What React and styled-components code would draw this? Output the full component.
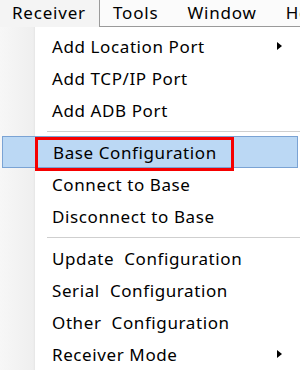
import styled, { createGlobalStyle } from 'styled-components';

const GlobalStyle = createGlobalStyle`
  html, body {
    margin: 0;
    padding: 0;
    background: #ffffff;
  }
  body {
    font-family: "Noto Sans", "Open Sans", sans-serif;
    color: #000;
    overflow: hidden;
  }
`;

const Screen = styled.div`
  width: 300px;
  height: 370px;
  display: flex;
  flex-direction: column;
  overflow: hidden;
  background: #ffffff;
`;

const MenuBar = styled.div`
  height: 27px;
  display: flex;
  align-items: stretch;
  flex-shrink: 0;
  font-size: 17px;
  letter-spacing: 0.8px;
`;

const OpenTab = styled.div`
  width: 99px;
  flex-shrink: 0;
  background: #f4f4f4;
  padding-left: 12px;
  line-height: 26px;
  box-sizing: border-box;
`;

const BarRest = styled.div`
  flex: 1;
  min-width: 0;
  overflow: hidden;
  display: flex;
  gap: 29px;
  padding-left: 13px;
  background: #fbfbfb;
  border-left: 1px solid #9a9a9a;
  border-bottom: 1px solid #9a9a9a;
  line-height: 25px;
  white-space: nowrap;
`;

const Menu = styled.div`
  flex: 1;
  position: relative;
  padding-top: 3px;
  background: linear-gradient(to right, #f7f7f7 0px, #efefef 33px, #e6e6e6 35px, #ffffff 35px);
`;

const Item = styled.div`
  position: relative;
  height: 32px;
  display: flex;
  align-items: center;
  padding-left: 52px;
  padding-right: 15px;
  font-size: 17px;
  letter-spacing: 0.6px;
  white-space: pre;
  box-sizing: border-box;
  ${(p) =>
    p.$active &&
    `
    margin: 0 2px;
    padding-left: 50px;
    padding-right: 13px;
    background: #bbd8f4;
    border: 1px solid #7aa3d4;
  `}
`;

const Label = styled.span`
  flex: 1;
`;

const Arrow = styled.span`
  width: 0;
  height: 0;
  border-top: 4px solid transparent;
  border-bottom: 4px solid transparent;
  border-left: 5px solid #000;
  margin-right: 3px;
`;

const Separator = styled.div`
  height: 10px;
  display: flex;
  align-items: center;
  padding-left: 47px;

  &::after {
    content: '';
    flex: 1;
    height: 1px;
    background: #cfcfcf;
  }
`;

const Callout = styled.div`
  position: absolute;
  left: 32px;
  top: 0px;
  width: 199px;
  height: 34px;
  border: 3px solid #f60000;
  box-sizing: border-box;
`;

const groups = [
  [
    { label: 'Add Location Port', sub: true },
    { label: 'Add TCP/IP Port' },
    { label: 'Add ADB Port' },
  ],
  [
    { label: 'Base Configuration', active: true },
    { label: 'Connect to Base' },
    { label: 'Disconnect to Base' },
  ],
  [
    { label: 'Update  Configuration' },
    { label: 'Serial  Configuration' },
    { label: 'Other  Configuration' },
    { label: 'Receiver Mode', sub: true },
  ],
];

export default function App() {
  return (
    <Screen>
      <GlobalStyle />
      <MenuBar>
        <OpenTab>Receiver</OpenTab>
        <BarRest>
          <span>Tools</span>
          <span>Window</span>
          <span>Help</span>
        </BarRest>
      </MenuBar>
      <Menu>
        {groups.map((items, gi) => (
          <div key={gi}>
            {gi > 0 && <Separator />}
            {items.map((it) => (
              <Item key={it.label} $active={it.active}>
                <Label>{it.label}</Label>
                {it.sub && <Arrow />}
                {it.active && <Callout />}
              </Item>
            ))}
          </div>
        ))}
      </Menu>
    </Screen>
  );
}
